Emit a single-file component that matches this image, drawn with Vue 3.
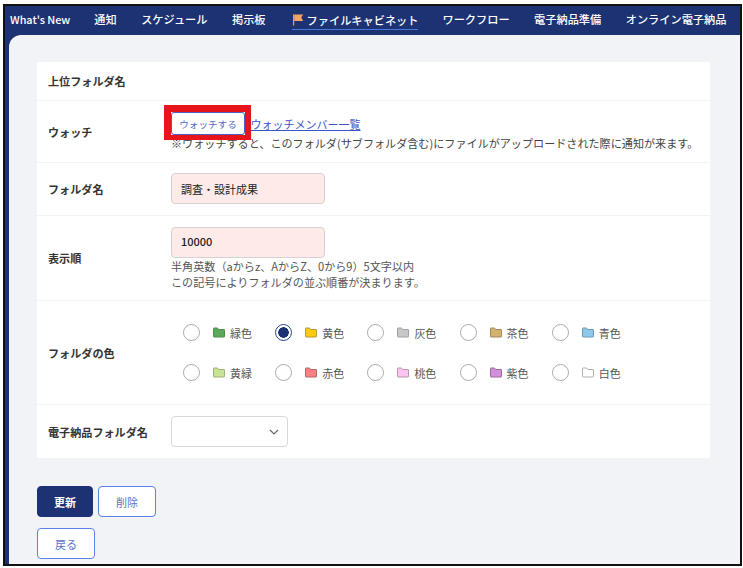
<script setup>
const navItems = [
  { label: "What's New" },
  { label: '通知' },
  { label: 'スケジュール' },
  { label: '掲示板' },
  { label: 'ファイルキャビネット', active: true },
  { label: 'ワークフロー' },
  { label: '電子納品準備' },
  { label: 'オンライン電子納品' },
]

const colorRows = [
  [
    { name: '緑色', fill: '#5aa958', edge: '#4c8f4b' },
    { name: '黄色', fill: '#ffc90e', edge: '#b39a3a', checked: true },
    { name: '灰色', fill: '#c8c8c8', edge: '#a0a0a0' },
    { name: '茶色', fill: '#d4b36f', edge: '#a08a5a' },
    { name: '青色', fill: '#8ec8e8', edge: '#6d9bb5' },
  ],
  [
    { name: '黄緑', fill: '#c8e392', edge: '#9aaf78' },
    { name: '赤色', fill: '#ff8080', edge: '#b06666' },
    { name: '桃色', fill: '#ffc4f0', edge: '#b896ae' },
    { name: '紫色', fill: '#d48fdc', edge: '#98689e' },
    { name: '白色', fill: '#ffffff', edge: '#b0b0b0' },
  ],
]
</script>

<template>
  <div class="frame">
    <nav class="nav">
      <a v-for="item in navItems" :key="item.label" class="nav-item" :class="{ active: item.active }">
        <svg v-if="item.active" class="flag" viewBox="0 0 12 12">
          <path d="M1 0.5 h1.2 v11 h-1.2 z" fill="#f0a050" />
          <path d="M2.2 0.5 h9 l-2 3 l2 3.5 h-9 z" fill="#f4a460" />
        </svg>
        {{ item.label }}
      </a>
    </nav>

    <main class="content">
      <section class="card">
        <div class="row head-row">
          <div class="label">上位フォルダ名</div>
        </div>

        <div class="row watch-row">
          <div class="label">ウォッチ</div>
          <div class="value">
            <div class="watch-line">
              <span class="mark"><button class="watch-btn">ウォッチする</button></span>
              <a class="watch-link">ウォッチメンバー一覧</a>
            </div>
            <p class="note">※ウォッチすると、このフォルダ(サブフォルダ含む)にファイルがアップロードされた際に通知が来ます。</p>
          </div>
        </div>

        <div class="row name-row">
          <div class="label">フォルダ名</div>
          <div class="value">
            <div class="input name-input">調査・設計成果</div>
          </div>
        </div>

        <div class="row order-row">
          <div class="label">表示順</div>
          <div class="value">
            <div class="input order-input">10000</div>
            <p class="hint">半角英数（aからz、AからZ、0から9）5文字以内<br />この記号によりフォルダの並ぶ順番が決まります。</p>
          </div>
        </div>

        <div class="row color-row">
          <div class="label">フォルダの色</div>
          <div class="value colors">
            <div v-for="(cols, i) in colorRows" :key="i" class="color-line">
              <label v-for="c in cols" :key="c.name" class="color">
                <span class="radio" :class="{ checked: c.checked }"></span>
                <svg class="folder" viewBox="0 0 12 11">
                  <path
                    d="M0.5 1.5 a0.5 0.5 0 0 1 0.5 -0.5 h3.5 l1.2 1.5 h5.3 a0.5 0.5 0 0 1 0.5 0.5 v6.5 a0.5 0.5 0 0 1 -0.5 0.5 h-10 a0.5 0.5 0 0 1 -0.5 -0.5 z"
                    :fill="c.fill"
                    :stroke="c.edge"
                  />
                </svg>
                <span class="color-name">{{ c.name }}</span>
              </label>
            </div>
          </div>
        </div>

        <div class="row select-row">
          <div class="label">電子納品フォルダ名</div>
          <div class="value">
            <div class="select">
              <svg class="chevron" viewBox="0 0 10 6">
                <path d="M1 1 l4 4 l4 -4" fill="none" stroke="#666" stroke-width="1.2" />
              </svg>
            </div>
          </div>
        </div>
      </section>

      <div class="actions">
        <button class="btn primary">更新</button>
        <button class="btn del">削除</button>
      </div>
      <div class="actions back">
        <button class="btn">戻る</button>
      </div>
    </main>
  </div>
</template>

<style>
html,
body {
  margin: 0;
  background: #fff;
}
</style>

<style scoped>
.frame {
  box-sizing: border-box;
  width: 739px;
  height: 562px;
  margin: 4px 0 0 3px;
  border: 2px solid #111;
  background: #1c3272;
  overflow: hidden;
  font-family: "Noto Sans CJK JP", "Noto Sans", sans-serif;
  color: #333;
}

.nav {
  display: flex;
  height: 29px;
  padding-left: 5px;
  color: #fff;
}

.nav-item {
  display: flex;
  align-items: center;
  height: 18px;
  margin-top: 4px;
  margin-right: 24.5px;
  font-size: 11.2px;
  font-weight: 500;
  white-space: nowrap;
  color: #fff;
}

.nav-item:first-child {
  font-size: 10.8px;
  margin-right: 24px;
}

.nav-item.active {
  height: 19px;
  margin-left: 1.5px;
  margin-right: 24px;
  border-bottom: 1px solid #4a78d8;
}

.flag {
  width: 12px;
  height: 12px;
  margin-right: 3px;
}

.content {
  box-sizing: border-box;
  height: 531px;
  margin-left: 4px;
  padding: 27px 30px 0 28px;
  background: #f1f3f7;
  border-top-left-radius: 12px;
}

.card {
  background: #fff;
}

.row {
  box-sizing: border-box;
  display: flex;
  align-items: center;
  padding-left: 11px;
  border-bottom: 1px solid #f1f3f7;
}

.label {
  width: 123px;
  flex: none;
  font-size: 11.1px;
  font-weight: 700;
  color: #333;
}

.head-row {
  height: 39px;
}

.watch-row {
  height: 62px;
}

.name-row {
  height: 53px;
}

.order-row {
  height: 85px;
}

.color-row {
  height: 104px;
}

.select-row {
  height: 53px;
  border-bottom: 0;
}

.watch-line {
  display: flex;
  align-items: center;
  height: 23px;
}

.mark {
  position: relative;
  display: block;
  height: 23px;
  margin-right: 5.5px;
}

/* red annotation box drawn over the screenshot */
.mark::after {
  content: "";
  position: absolute;
  top: -7px;
  right: -6px;
  bottom: -5px;
  left: -7px;
  border-style: solid;
  border-color: #e8141c;
  border-width: 7px 6px 5px 7px;
}

.watch-btn {
  display: block;
  box-sizing: border-box;
  width: 74px;
  height: 23px;
  padding: 0;
  border: 1px solid #4a5fc0;
  border-radius: 3px;
  background: #fff;
  font: inherit;
  font-size: 9.6px;
  color: #5468c8;
}

.watch-link {
  font-size: 11px;
  color: #3b55c8;
  text-decoration: underline;
}

.note {
  margin: 0;
  font-size: 11.1px;
  line-height: 16px;
  white-space: nowrap;
  color: #444;
}

.input {
  box-sizing: border-box;
  width: 154px;
  height: 31px;
  padding-left: 9px;
  border: 1px solid #d8d0d0;
  border-radius: 4px;
  background: #ffeaea;
  font-size: 11px;
  line-height: 29px;
  color: #222;
}

.name-input {
  margin-bottom: 1px;
  line-height: 31px;
}

.order-input {
  font-weight: 500;
  line-height: 27px;
}

.hint {
  margin: 0;
  font-size: 11.1px;
  line-height: 16px;
  color: #555;
}

.colors {
  display: flex;
  flex-direction: column;
  gap: 23px;
  padding-left: 12px;
}

.color-line {
  display: flex;
}

.color {
  display: flex;
  align-items: center;
  width: 92.2px;
  height: 17px;
}

.radio {
  box-sizing: border-box;
  width: 17px;
  height: 17px;
  margin-right: 13px;
  border: 1px solid #aaa;
  border-radius: 50%;
  background: #fff;
}

.radio.checked {
  border-color: #2a4488;
  background: radial-gradient(circle, #1c3272 0 5px, #fff 5.5px);
}

.folder {
  width: 12px;
  height: 11px;
  margin-right: 5px;
}

.color-name {
  font-size: 11px;
  color: #555;
}

.select {
  position: relative;
  box-sizing: border-box;
  width: 117px;
  height: 31px;
  border: 1px solid #d8d8d8;
  border-radius: 4px;
  background: #fff;
}

.chevron {
  position: absolute;
  right: 8px;
  top: 12px;
  width: 10px;
  height: 6px;
}

.actions {
  display: flex;
  gap: 5px;
  margin-top: 28px;
}

.actions.back {
  margin-top: 11px;
}

.btn {
  box-sizing: border-box;
  width: 58px;
  height: 31px;
  padding: 0;
  border: 1px solid #5b82e8;
  border-radius: 4px;
  background: #fff;
  font: inherit;
  font-size: 11px;
  color: #5b72c8;
}

.btn.primary {
  width: 56px;
  border-color: #1c3272;
  background: #1c3272;
  color: #fff;
  font-weight: 700;
}
</style>
